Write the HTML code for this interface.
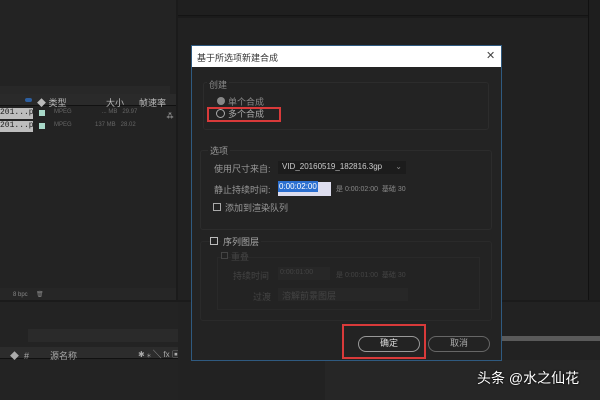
<!DOCTYPE html>
<html><head><meta charset="utf-8"><style>
*{margin:0;padding:0;box-sizing:border-box}
body{width:600px;height:400px;background:#1b1b1b;position:relative;overflow:hidden;font-family:"Liberation Sans","Noto Sans CJK SC",sans-serif;color:#9a9a9a;font-size:9px}
.a{position:absolute}
</style></head><body>
<!-- left panel -->
<div class="a" style="left:0;top:0;width:176px;height:300px;background:#232323"></div>
<div class="a" style="left:0;top:86px;width:170px;height:9px;background:#282828"></div>
<div class="a" style="left:0;top:94px;width:176px;height:12px;background:#2a2a2a;border-bottom:1px solid #111"></div>
<div class="a" style="left:25px;top:98px;width:7px;height:4px;background:#2d5fa0;border-radius:3px"></div>
<div class="a" style="left:37px;top:96px;color:#bbb">◆ 类型</div>
<div class="a" style="left:106px;top:96px;color:#bbb">大小</div>
<div class="a" style="left:139px;top:96px;color:#bbb">帧速率</div>
<div class="a" style="left:0;top:108px;width:33px;height:11px;background:#bdbdbd;color:#222;font-family:'Liberation Mono';font-size:8px">201...p</div>
<div class="a" style="left:0;top:121px;width:33px;height:11px;background:#bdbdbd;color:#222;font-family:'Liberation Mono';font-size:8px">201...p</div>
<div class="a" style="left:39px;top:110px;width:6px;height:6px;background:#a8d8c8"></div>
<div class="a" style="left:39px;top:123px;width:6px;height:6px;background:#a8d8c8"></div>
<div class="a" style="left:54px;top:109px;font-size:6px;color:#666">MPEG &nbsp;&nbsp;&nbsp;&nbsp;&nbsp;&nbsp;&nbsp;&nbsp;&nbsp;&nbsp;&nbsp;&nbsp;&nbsp;&nbsp;&nbsp;&nbsp;&nbsp;... MB &nbsp; 29.97</div>
<div class="a" style="left:54px;top:122px;font-size:6px;color:#666">MPEG &nbsp;&nbsp;&nbsp;&nbsp;&nbsp;&nbsp;&nbsp;&nbsp;&nbsp;&nbsp;&nbsp;&nbsp;&nbsp;137 MB &nbsp; 28.02</div>
<div class="a" style="left:166px;top:110px;color:#ccc;font-size:8px">⁂</div>
<div class="a" style="left:0;top:288px;width:176px;height:12px;background:#262626"></div>
<div class="a" style="left:13px;top:291px;font-size:6px;color:#888">8 bpc &nbsp;&nbsp;&nbsp;&nbsp;🗑</div>
<!-- bottom -->
<div class="a" style="left:0;top:302px;width:190px;height:98px;background:#232323"></div>
<div class="a" style="left:28px;top:329px;width:155px;height:13px;background:#2a2a2a"></div>
<div class="a" style="left:0;top:347px;width:190px;height:12px;background:#2c2c2c;border-bottom:1px solid #111"></div>
<div class="a" style="left:50px;top:349px;color:#aaa">源名称</div>
<div class="a" style="left:10px;top:349px;color:#aaa">◆ &nbsp;#</div>
<div class="a" style="left:138px;top:349px;color:#aaa;font-size:8px">✱ ⁎ ╲ fx ▣</div>
<!-- center/right -->
<div class="a" style="left:178px;top:0;width:410px;height:16px;background:#1f1f1f;border-bottom:1px solid #141414"></div>
<div class="a" style="left:178px;top:18px;width:410px;height:282px;background:#212121"></div>
<div class="a" style="left:588px;top:0;width:12px;height:300px;background:#1e1e1e;border-left:1px solid #111"></div>
<div class="a" style="left:178px;top:302px;width:422px;height:98px;background:#222"></div>
<div class="a" style="left:500px;top:336px;width:100px;height:5px;background:#5a5a5a"></div>
<div class="a" style="left:325px;top:360px;width:275px;height:40px;background:#262626"></div>
<!-- dialog -->
<div class="a" style="left:191px;top:45px;width:311px;height:316px;background:#232323;border:1px solid #2f5a80"></div>
<div class="a" style="left:192px;top:46px;width:309px;height:21px;background:#fff"></div>
<div class="a" style="left:197px;top:51px;color:#333;font-size:9px">基于所选项新建合成</div>
<div class="a" style="left:486px;top:49px;color:#444;font-size:11px">✕</div>
<div class="a" style="left:203px;top:82px;width:286px;height:48px;border:1px solid #2c2c2c;border-radius:3px"></div>
<div class="a" style="left:207px;top:78px;background:#232323;padding:0 2px;color:#888">创建</div>
<div class="a" style="left:217px;top:97px;width:8px;height:8px;border-radius:50%;background:#888"></div>
<div class="a" style="left:228px;top:95px;color:#888">单个合成</div>
<div class="a" style="left:216px;top:109px;width:9px;height:9px;border-radius:50%;border:1.5px solid #aaa"></div>
<div class="a" style="left:228px;top:107px;color:#aaa">多个合成</div>
<div class="a" style="left:207px;top:107px;width:74px;height:15px;border:2px solid #d93a3a"></div>
<div class="a" style="left:200px;top:150px;width:292px;height:80px;border:1px solid #2c2c2c;border-radius:3px"></div>
<div class="a" style="left:208px;top:144px;background:#232323;padding:0 2px;color:#999">选项</div>
<div class="a" style="left:214px;top:162px;color:#999">使用尺寸来自:</div>
<div class="a" style="left:278px;top:161px;width:128px;height:13px;background:#1c1c1c;color:#ccc;font-size:8px;padding:1px 4px">VID_20160519_182816.3gp<span style="float:right;color:#888">⌄</span></div>
<div class="a" style="left:214px;top:183px;color:#999">静止持续时间:</div>
<div class="a" style="left:278px;top:182px;width:53px;height:14px;background:#dde;color:#fff;font-size:8px"><span style="background:#2b6fd0;padding:1px">0:00:02:00</span></div>
<div class="a" style="left:336px;top:184px;color:#888;font-size:7px">是 0:00:02:00 &nbsp;基础 30</div>
<div class="a" style="left:213px;top:203px;width:8px;height:8px;border:1px solid #aaa"></div>
<div class="a" style="left:225px;top:201px;color:#999">添加到渲染队列</div>
<div class="a" style="left:200px;top:241px;width:292px;height:80px;border:1px solid #2a2a2a;border-radius:3px"></div>
<div class="a" style="left:210px;top:237px;width:8px;height:8px;border:1px solid #bbb;background:#232323"></div>
<div class="a" style="left:221px;top:235px;background:#232323;padding:0 2px;color:#aaa">序列图层</div>
<div class="a" style="left:217px;top:257px;width:263px;height:53px;border:1px solid #292929"></div>
<div class="a" style="left:221px;top:252px;width:7px;height:7px;border:1px solid #444;background:#232323"></div>
<div class="a" style="left:231px;top:250px;color:#444;background:#232323">重叠</div>
<div class="a" style="left:233px;top:269px;color:#444">持续时间</div>
<div class="a" style="left:278px;top:267px;width:52px;height:13px;background:#272727;color:#444;font-size:7px;padding:2px">0:00:01:00</div>
<div class="a" style="left:336px;top:270px;color:#444;font-size:7px">是 0:00:01:00 &nbsp;基础 30</div>
<div class="a" style="left:253px;top:290px;color:#444">过渡</div>
<div class="a" style="left:278px;top:288px;width:130px;height:13px;background:#272727;color:#444;padding:1px 4px">溶解前景图层</div>
<div class="a" style="left:358px;top:336px;width:62px;height:16px;border:1.5px solid #999;border-radius:8px;color:#ddd;text-align:center;line-height:13px">确定</div>
<div class="a" style="left:428px;top:336px;width:62px;height:16px;border:1.5px solid #666;border-radius:8px;color:#aaa;text-align:center;line-height:13px">取消</div>
<div class="a" style="left:342px;top:324px;width:84px;height:35px;border:2px solid #d93a3a"></div>
<div class="a" style="left:477px;top:368px;color:#fff;font-size:14px;text-shadow:0 0 2px #000">头条 @水之仙花</div>
</body></html>
